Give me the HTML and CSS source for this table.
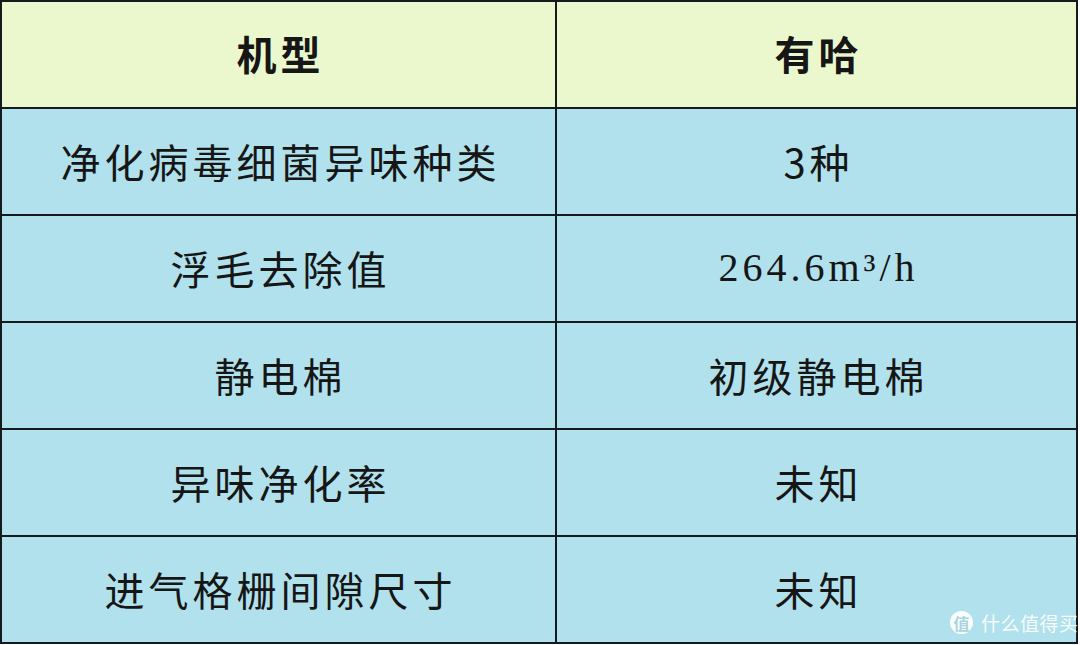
FILE: index.html
```html
<!DOCTYPE html>
<html lang="zh-CN">
<head>
<meta charset="utf-8">
<title>机型对比</title>
<link rel="stylesheet" href="styles.css">
</head>
<body>
<div class="page">
  <div class="table">
    <div class="cell head">机型</div>
    <div class="cell head">有哈</div>
    <div class="cell">净化病毒细菌异味种类</div>
    <div class="cell">3种</div>
    <div class="cell">浮毛去除值</div>
    <div class="cell"><span class="num">264.6m³/h</span></div>
    <div class="cell">静电棉</div>
    <div class="cell">初级静电棉</div>
    <div class="cell">异味净化率</div>
    <div class="cell">未知</div>
    <div class="cell">进气格栅间隙尺寸</div>
    <div class="cell">未知</div>
  </div>
  <div class="watermark">
    <span class="wm-badge">值</span>
    <span class="wm-text">什么值得买</span>
  </div>
</div>
</body>
</html>
```
FILE: styles.css
```css
html, body {
  margin: 0;
  padding: 0;
  background: #ffffff;
}
.page {
  position: relative;
  width: 1080px;
  height: 645px;
}
.table {
  display: grid;
  grid-template-columns: 553px 519px;
  grid-auto-rows: 105px;
  gap: 2px;
  padding: 2px;
  width: max-content;
  background: #141a1e;
}
.cell {
  display: flex;
  align-items: center;
  justify-content: center;
  background: #b1e1ec;
  color: #161616;
  font-family: "Noto Sans CJK SC", "Noto Sans", sans-serif;
  font-size: 40px;
  letter-spacing: 4px;
  padding-left: 4px;
  padding-bottom: 2px;
  box-sizing: border-box;
}
.cell.head {
  background: #ebf7cd;
  font-weight: 700;
  padding-bottom: 4px;
}
.num {
  font-family: "Liberation Serif", serif;
  font-size: 40px;
  letter-spacing: 4px;
}
.watermark {
  position: absolute;
  left: 950px;
  top: 609px;
  display: flex;
  align-items: center;
  gap: 8px;
  color: rgba(255, 255, 255, 0.92);
  font-family: "Noto Sans CJK SC", sans-serif;
}
.wm-badge {
  width: 23px;
  height: 23px;
  border-radius: 50%;
  background: rgba(255, 255, 255, 0.92);
  color: #a9d4df;
  font-size: 16px;
  font-weight: 700;
  display: flex;
  align-items: center;
  justify-content: center;
}
.wm-text {
  font-size: 19px;
  letter-spacing: 0.5px;
}
```
